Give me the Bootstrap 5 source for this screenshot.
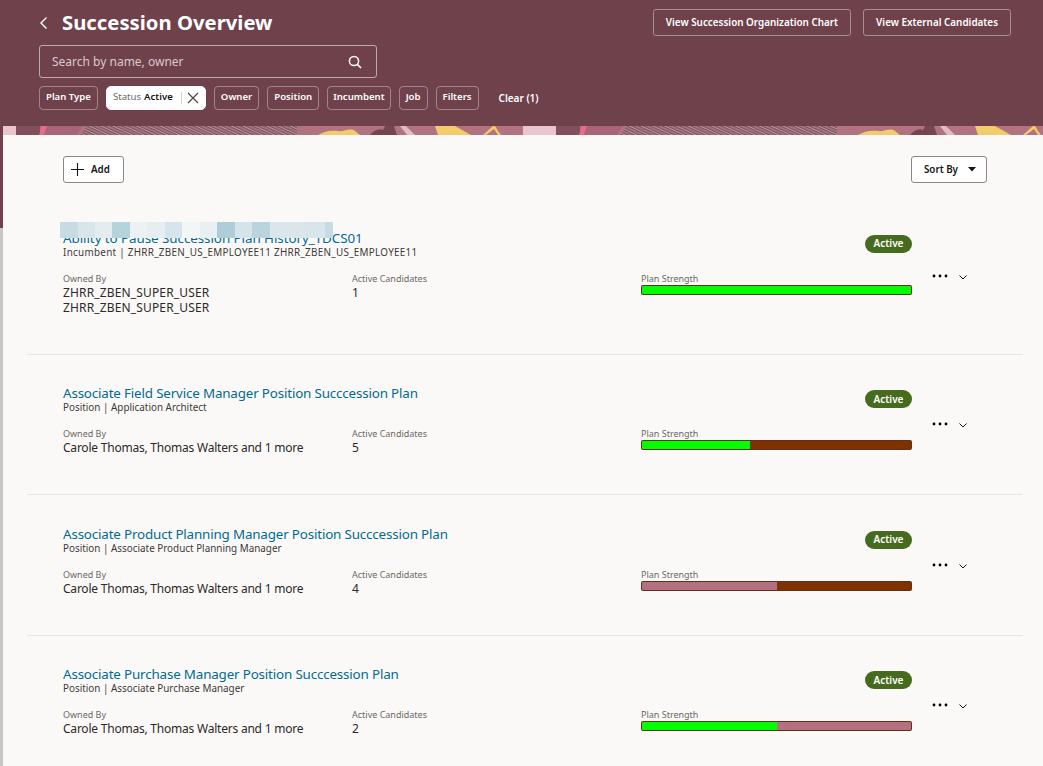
<!DOCTYPE html>
<html lang="en">
<head>
<meta charset="utf-8">
<title>Succession Overview</title>
<link href="https://cdn.jsdelivr.net/npm/bootstrap@5.3.0/dist/css/bootstrap.min.css" rel="stylesheet">
<style>
html,body{height:100%;overflow:hidden}
body{font-family:"Noto Sans","Liberation Sans",sans-serif;color:#161513;background:linear-gradient(#6f414b 0,#6f414b 228px,#c9c7c5 228px);}
.hero{height:126px;background:#6f414b;padding:9px 32px 0 39px;color:#fff}
.hero-left{width:338px}
.page-title{font-size:20.3px;font-weight:700;line-height:27px;margin:0;letter-spacing:0}
.back-link{width:23px;color:#fff;line-height:0}
.search-box{height:33px;margin-top:9px;border:1px solid rgba(255,255,255,.55);border-radius:3px;padding:0 14px 0 12px;font-size:12px;color:#d9c9cc}
.chip-row{margin-top:8px;white-space:nowrap}
.chip{height:24px;border:1px solid rgba(255,255,255,.35);border-radius:4px;padding:0 6px 2px;margin-right:8px;font-size:9.6px;font-weight:600;color:#fff;display:flex;align-items:center}
.chip-tight{padding:0 5px 2px}
.chip-on{background:#fff;border-color:#fff;color:#161513;padding:0 6px;width:101px;border-radius:5px;margin-right:8px}
.chip-on .chip-key{color:#6b6865;font-weight:400;margin-right:3px;padding-bottom:2px}
.chip-on .chip-val{padding-bottom:2px}
.chip-sep{width:1px;height:12px;background:#d6d3d0;margin:0 5px 0 8px}
.chip-clear{font-size:10px;font-weight:600;color:#fff;margin-left:12px}
.head-btn{--bs-btn-color:#fff;--bs-btn-border-color:rgba(255,255,255,.4);--bs-btn-hover-color:#fff;--bs-btn-hover-bg:transparent;--bs-btn-hover-border-color:rgba(255,255,255,.4);height:27px;font-size:9.9px;font-weight:600;padding:0 12px;border-radius:3px;line-height:25px;white-space:nowrap}
.strip{display:block;height:9px;margin-left:3px;width:calc(100% - 3px);background:#b27380}
.sheet{margin-left:3px;background:#fbf9f8;height:631px;overflow:hidden}
.toolbar{padding:21px 56px 16px 60px}
.tool-btn{--bs-btn-color:#161513;--bs-btn-border-color:#8a8785;--bs-btn-hover-color:#161513;--bs-btn-hover-border-color:#8a8785;--bs-btn-hover-bg:#fff;height:27px;background:#fff;font-size:9.8px;font-weight:600;padding:2px 10px 0 12px;border-radius:3px;white-space:nowrap;display:flex;align-items:center}
.add-btn{padding:2px 13px 0 7px}
.add-btn svg{margin-right:7px;margin-top:-2px}
.sort-btn svg{margin-left:10px;margin-top:-2px}
.plan-list{margin:0 20px 0 24px}
.plan-item{border-bottom:1px solid #e7e5e3;padding:0 0 0 36px}
.plan-item:last-child{border-bottom:0}
.plan-main{width:849px;flex:none;padding:29.5px 0 39px}
.plan-name{font-size:13.4px;letter-spacing:-.17px;line-height:18px;color:#006b8f;display:block;text-decoration:none}
.plan-name-wide{letter-spacing:-.06px}
.plan-sub{font-size:9.9px;line-height:11px;color:#3b3936}
.plan-sub-wide{letter-spacing:.28px}
.state-pill{width:47px;height:18px;margin-top:6px;background:#476b1e;color:#fff;border-radius:9px;font-size:10px;font-weight:600;display:flex;align-items:center;justify-content:center}
.field-row{margin-top:15px}
.field-a{width:289px}
.field-b{width:289px}
.field-c{width:271px}
.field-label{font-size:9px;line-height:12px;color:#6b6865}
.field-val{font-size:12px;letter-spacing:-.22px;line-height:15px;color:#2b2927}
.field-caps{letter-spacing:.15px}
.strength{--bs-progress-height:10px;--bs-progress-border-radius:2px;--bs-progress-bg:#7f3200;border:1px solid rgba(70,50,40,.55)}
.seg-green{--bs-progress-bar-bg:#00ff00}
.seg-rose{--bs-progress-bar-bg:#b5707f}
.seg-brown{--bs-progress-bar-bg:#7f3200}
.plan-tools{margin-left:20px;gap:11px;color:#161513}
.plan-tools svg:last-child{margin-top:3px}
.blur-wrap{position:relative}
.blur-over{position:absolute;left:-3px;top:-7px;width:273px;height:16px;background:linear-gradient(90deg,#c6dbe2 0 17.5px,#d8e5ea 17.5px 35px,#e3edf0 35px 52.5px,#b5d3da 52.5px 70px,#ecf2f3 70px 87.5px,#e6eef1 87.5px 105px,#d7e5ea 105px 122.5px,#f3f6f7 122.5px 140px,#e9f0f3 140px 157.5px,#aecdd8 157.5px 175px,#d5e4e9 175px 192.5px,#b9d4dc 192.5px 210px,#dbe6eb 210px 227.5px,#dbe6eb 227.5px 245px,#d8e5ea 245px 265px,#c6dbe2 265px)}
</style>
</head>
<body>
<header class="hero d-flex justify-content-between align-items-start">
  <div class="hero-left">
    <div class="d-flex align-items-center">
      <a class="back-link" href="#" aria-label="Back"><svg width="9" height="14" viewBox="0 0 9 14"><path d="M7.500 1.500 2 7l5.500 5.500" fill="none" stroke="#fff" stroke-width="1.4"/></svg></a>
      <h1 class="page-title">Succession Overview</h1>
    </div>
    <div class="search-box d-flex align-items-center justify-content-between">
      <span>Search by name, owner</span>
      <svg width="14" height="14" viewBox="0 0 14 14"><circle cx="6" cy="6" r="4.6" fill="none" stroke="#fff" stroke-width="1.5"/><path d="m9.400 9.400 3.600 3.600" stroke="#fff" stroke-width="1.7"/></svg>
    </div>
    <div class="chip-row d-flex align-items-center">
      <span class="chip">Plan Type</span>
      <span class="chip chip-on"><span class="chip-key">Status</span><span class="chip-val">Active</span><span class="chip-sep"></span><svg width="12" height="12" viewBox="0 0 12 12"><path d="m1 1 10 10M11 1 1 11" stroke="#4a4744" stroke-width="1.2"/></svg></span>
      <span class="chip">Owner</span>
      <span class="chip">Position</span>
      <span class="chip chip-tight">Incumbent</span>
      <span class="chip">Job</span>
      <span class="chip">Filters</span>
      <span class="chip-clear">Clear&nbsp;(1)</span>
    </div>
  </div>
  <div class="d-flex gap-2">
    <button type="button" class="btn head-btn">View Succession Organization Chart</button>
    <button type="button" class="btn head-btn ms-1">View External Candidates</button>
  </div>
</header>
<svg class="strip" aria-hidden="true">
  <defs>
    <pattern id="hatch" width="5" height="5" patternUnits="userSpaceOnUse" patternTransform="rotate(25)">
      <rect width="5" height="5" fill="#7c4e59"/><path d="M0 1h5M0 3.500h5" stroke="#c9a3ac" stroke-width=".9"/>
    </pattern>
    <pattern id="band" width="540" height="9" patternUnits="userSpaceOnUse">
      <rect width="540" height="9" fill="#b27380"/>
      <rect width="13" height="9" fill="#e9c5cd"/>
      <rect x="13" width="24" height="9" fill="#82505c"/>
      <path d="M39 0h5l-3 9h-5z" fill="#ea6a8c"/>
      <path d="M44 0h36l-6 9H41z" fill="#a86478"/>
      <path d="M84 0h210v9H77z" fill="url(#hatch)"/>
      <path d="M315 9c6-4 14-5 20-4s12-4 17 0l5 4z" fill="#f2cb6a"/>
      <path d="M367 9c4-5 9-7 13-5l2-4h9l3 9z" fill="#754550"/>
      <path d="M397 0h6l9 9h-8z" fill="#e2bcc5"/>
      <path d="M432 0h20l16 9h-33z" fill="#f2cb6a"/>
      <path d="M480 9l10-9h2l3 5 3 4h-3l-4-6-8 6z" fill="#f2cb6a"/>
      <rect x="520" width="20" height="9" fill="#e9c5cd"/>
    </pattern>
  </defs>
  <rect width="100%" height="9" fill="url(#band)"/>
</svg>
<main class="sheet">
  <div class="toolbar d-flex justify-content-between">
    <button type="button" class="btn tool-btn add-btn"><svg width="13" height="13" viewBox="0 0 13 13"><path d="M6.500 0v13M0 6.500h13" stroke="#161513" stroke-width="1.1"/></svg>Add</button>
    <button type="button" class="btn tool-btn sort-btn">Sort By<svg width="8" height="5" viewBox="0 0 8 5"><path d="M0 0h8L4 4.500z" fill="#161513"/></svg></button>
  </div>
  <div class="plan-list">
    <section class="plan-item d-flex align-items-center">
      <div class="plan-main">
        <div class="d-flex justify-content-between align-items-start">
          <div class="blur-wrap"><a class="plan-name plan-name-wide" href="#">Ability to Pause Succession Plan History_TDCS01</a><div class="plan-sub plan-sub-wide">Incumbent | ZHRR_ZBEN_US_EMPLOYEE11 ZHRR_ZBEN_US_EMPLOYEE11</div><div class="blur-over"></div></div>
          <span class="state-pill">Active</span>
        </div>
        <div class="field-row d-flex">
          <div class="field-a"><div class="field-label">Owned By</div><div class="field-val field-caps">ZHRR_ZBEN_SUPER_USER<br>ZHRR_ZBEN_SUPER_USER</div></div>
          <div class="field-b"><div class="field-label">Active Candidates</div><div class="field-val">1</div></div>
          <div class="field-c"><div class="field-label">Plan Strength</div><div class="progress strength"><div class="progress-bar seg-green" style="width:100%"></div></div></div>
        </div>
      </div>
      <div class="plan-tools d-flex align-items-center"><svg width="16" height="4" viewBox="0 0 16 4"><circle cx="2" cy="2" r="1.4"/><circle cx="8" cy="2" r="1.4"/><circle cx="14" cy="2" r="1.4"/></svg><svg width="8" height="5" viewBox="0 0 8 5"><path d="m.5.5 3.500 3.500L7.500.5" fill="none" stroke="#161513"/></svg></div>
    </section>
    <section class="plan-item d-flex align-items-center">
      <div class="plan-main">
        <div class="d-flex justify-content-between align-items-start">
          <div><a class="plan-name" href="#">Associate Field Service Manager Position Succcession Plan</a><div class="plan-sub">Position | Application Architect</div></div>
          <span class="state-pill">Active</span>
        </div>
        <div class="field-row d-flex">
          <div class="field-a"><div class="field-label">Owned By</div><div class="field-val">Carole Thomas, Thomas Walters and 1 more</div></div>
          <div class="field-b"><div class="field-label">Active Candidates</div><div class="field-val">5</div></div>
          <div class="field-c"><div class="field-label">Plan Strength</div><div class="progress strength"><div class="progress-bar seg-green" style="width:40%"></div><div class="progress-bar seg-brown" style="width:60%"></div></div></div>
        </div>
      </div>
      <div class="plan-tools d-flex align-items-center"><svg width="16" height="4" viewBox="0 0 16 4"><circle cx="2" cy="2" r="1.4"/><circle cx="8" cy="2" r="1.4"/><circle cx="14" cy="2" r="1.4"/></svg><svg width="8" height="5" viewBox="0 0 8 5"><path d="m.5.5 3.500 3.500L7.500.5" fill="none" stroke="#161513"/></svg></div>
    </section>
    <section class="plan-item d-flex align-items-center">
      <div class="plan-main">
        <div class="d-flex justify-content-between align-items-start">
          <div><a class="plan-name" href="#">Associate Product Planning Manager Position Succcession Plan</a><div class="plan-sub">Position | Associate Product Planning Manager</div></div>
          <span class="state-pill">Active</span>
        </div>
        <div class="field-row d-flex">
          <div class="field-a"><div class="field-label">Owned By</div><div class="field-val">Carole Thomas, Thomas Walters and 1 more</div></div>
          <div class="field-b"><div class="field-label">Active Candidates</div><div class="field-val">4</div></div>
          <div class="field-c"><div class="field-label">Plan Strength</div><div class="progress strength"><div class="progress-bar seg-rose" style="width:50%"></div><div class="progress-bar seg-brown" style="width:50%"></div></div></div>
        </div>
      </div>
      <div class="plan-tools d-flex align-items-center"><svg width="16" height="4" viewBox="0 0 16 4"><circle cx="2" cy="2" r="1.4"/><circle cx="8" cy="2" r="1.4"/><circle cx="14" cy="2" r="1.4"/></svg><svg width="8" height="5" viewBox="0 0 8 5"><path d="m.5.5 3.500 3.500L7.500.5" fill="none" stroke="#161513"/></svg></div>
    </section>
    <section class="plan-item d-flex align-items-center">
      <div class="plan-main">
        <div class="d-flex justify-content-between align-items-start">
          <div><a class="plan-name" href="#">Associate Purchase Manager Position Succcession Plan</a><div class="plan-sub">Position | Associate Purchase Manager</div></div>
          <span class="state-pill">Active</span>
        </div>
        <div class="field-row d-flex">
          <div class="field-a"><div class="field-label">Owned By</div><div class="field-val">Carole Thomas, Thomas Walters and 1 more</div></div>
          <div class="field-b"><div class="field-label">Active Candidates</div><div class="field-val">2</div></div>
          <div class="field-c"><div class="field-label">Plan Strength</div><div class="progress strength"><div class="progress-bar seg-green" style="width:50%"></div><div class="progress-bar seg-rose" style="width:50%"></div></div></div>
        </div>
      </div>
      <div class="plan-tools d-flex align-items-center"><svg width="16" height="4" viewBox="0 0 16 4"><circle cx="2" cy="2" r="1.4"/><circle cx="8" cy="2" r="1.4"/><circle cx="14" cy="2" r="1.4"/></svg><svg width="8" height="5" viewBox="0 0 8 5"><path d="m.5.5 3.500 3.500L7.500.5" fill="none" stroke="#161513"/></svg></div>
    </section>
  </div>
</main>
<script src="https://cdn.jsdelivr.net/npm/bootstrap@5.3.0/dist/js/bootstrap.bundle.min.js"></script>
</body>
</html>
